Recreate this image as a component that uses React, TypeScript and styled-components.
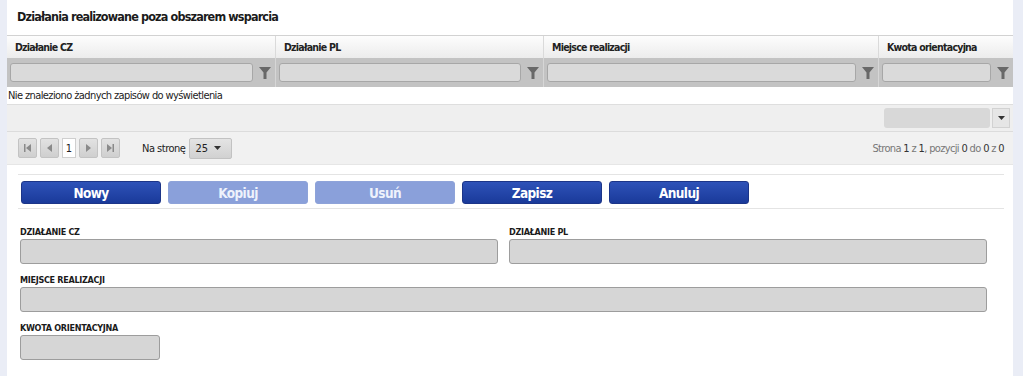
import React from "react";
import styled, { createGlobalStyle } from "styled-components";

const Global = createGlobalStyle`
  html, body { margin: 0; padding: 0; background: #eaedf6; }
  body { font-family: "DejaVu Sans Condensed", "DejaVu Sans", sans-serif; font-stretch: condensed; color: #222; }
`;

const Page = styled.div`
  display: flex;
  width: 1023px;
  height: 376px;
  overflow: hidden;
`;

const Panel = styled.div`
  margin-left: 7px;
  width: 1006px;
  flex-shrink: 0;
  background: #fff;
  display: block;
`;

const Title = styled.div`
  height: 35px;
  box-sizing: border-box;
  padding: 9px 0 0 10px;
  font-size: 12.5px;
  letter-spacing: -0.85px;
  font-weight: bold;
  color: #1b1b1b;
`;

const Cols = "269px 268px 335px 134px";

const HeaderRow = styled.div`
  display: grid;
  grid-template-columns: ${Cols};
  height: 23px;
  border-top: 1px solid #d2d2d2;
  box-sizing: border-box;
  background: linear-gradient(#fdfdfd, #ececec);
`;

const HeaderCell = styled.div`
  font-size: 10.5px;
  letter-spacing: -0.75px;
  font-weight: bold;
  padding: 5px 0 0 8px;
  border-right: 1px solid #dadada;
  &:last-child { border-right: none; }
`;

const FilterRow = styled.div`
  display: grid;
  grid-template-columns: ${Cols};
  height: 29px;
  background: #c3c3c3;
`;

const FilterCell = styled.div`
  display: flex;
  align-items: center;
  padding: 0 4px 0 3px;
  gap: 6px;
  border-right: 1px solid #d6d6d6;
  &:last-child { border-right: none; }
`;

const FilterInput = styled.div`
  flex: 1;
  height: 19px;
  box-sizing: border-box;
  background: #dadada;
  border: 1px solid #a7a7a7;
  border-radius: 3px;
`;

const Funnel = () => (
  <svg width="12" height="14" viewBox="0 0 12 14">
    <path d="M0 1h12L7.5 6.5V13H4.5V6.5Z" fill="#686868" />
  </svg>
);

const EmptyRow = styled.div`
  height: 17px;
  font-size: 11px;
  letter-spacing: -0.6px;
  padding: 2px 0 0 1px;
  box-sizing: border-box;
  color: #222;
`;

const ToolRow = styled.div`
  height: 27px;
  box-sizing: border-box;
  background: #efefef;
  border-top: 1px solid #dedede;
  display: flex;
  justify-content: flex-end;
  align-items: center;
  padding-right: 3px;
  gap: 2px;
`;

const SelBox = styled.div`
  width: 106px;
  height: 20px;
  background: #d8d8d8;
  border-radius: 3px;
`;

const SelBtn = styled.div`
  width: 18px;
  height: 20px;
  background: #e6e6e6;
  border: 1px solid #d2d2d2;
  box-sizing: border-box;
  display: flex;
  align-items: center;
  justify-content: center;
`;

const Caret = ({ c = "#333" }: { c?: string }) => (
  <svg width="7" height="4" viewBox="0 0 7 4"><path d="M0 0h7L3.5 4Z" fill={c} /></svg>
);

const PagerRow = styled.div`
  height: 34px;
  box-sizing: border-box;
  background: #f1f1f1;
  border-top: 1px solid #dcdcdc;
  border-bottom: 1px solid #e6e6e6;
  display: flex;
  align-items: center;
  padding: 0 9px 0 11px;
`;

const PBtn = styled.div`
  width: 19px;
  height: 20px;
  box-sizing: border-box;
  background: linear-gradient(#e2e2e2, #cfcfcf);
  border: 1px solid #c3c3c3;
  border-radius: 2px;
  display: flex;
  align-items: center;
  justify-content: center;
  margin-right: 3px;
`;

const PageNum = styled.div`
  width: 14px;
  height: 20px;
  box-sizing: border-box;
  background: #fff;
  border: 1px solid #cfcfcf;
  font-size: 11px;
  display: flex;
  align-items: center;
  justify-content: center;
  margin-right: 3px;
`;

const NaStrone = styled.span`
  font-size: 11px;
  letter-spacing: -0.5px;
  margin: 0 4px 0 19px;
`;

const PerPage = styled.div`
  width: 43px;
  height: 21px;
  box-sizing: border-box;
  background: linear-gradient(#e4e4e4, #d1d1d1);
  border: 1px solid #c2c2c2;
  border-radius: 2px;
  font-size: 11px;
  display: flex;
  align-items: center;
  justify-content: space-between;
  padding: 0 10px 0 5px;
`;

const PageInfo = styled.div`
  margin-left: auto;
  font-size: 11px;
  letter-spacing: -0.65px;
  color: #777;
  b { color: #333; font-weight: normal; }
`;

const Icon = ({ d }: { d: string }) => (
  <svg width="9" height="8" viewBox="0 0 9 8"><path d={d} fill="#8a8a8a" /></svg>
);

const Body = styled.div`
  padding: 9px 9px 0 11px;
`;

const ButtonBar = styled.div`
  border-top: 1px solid #e4e4e4;
  border-bottom: 1px solid #e4e4e4;
  padding: 6px 0 4px 3px;
  display: flex;
  gap: 7px;
`;

const Btn = styled.div<{ $disabled?: boolean }>`
  width: 140px;
  height: 23px;
  box-sizing: border-box;
  border-radius: 3px;
  border: 1px solid ${(p) => (p.$disabled ? "#8ea3d9" : "#1c3588")};
  background: ${(p) =>
    p.$disabled ? "#8aa0da" : "linear-gradient(#2e52b8, #1a3a9a)"};
  color: ${(p) => (p.$disabled ? "#eef2fc" : "#fff")};
  font-size: 13.5px;
  letter-spacing: -0.6px;
  font-weight: bold;
  display: flex;
  align-items: center;
  justify-content: center;
`;

const Form = styled.div`
  display: grid;
  grid-template-columns: 478px 478px;
  column-gap: 11px;
  padding: 17px 0 0 2px;
`;

const Field = styled.div<{ $span?: boolean }>`
  grid-column: ${(p) => (p.$span ? "1 / span 2" : "auto")};
  display: flex;
  flex-direction: column;
  margin-bottom: 10px;
`;

const Label = styled.div`
  font-size: 9px;
  font-weight: bold;
  letter-spacing: -0.3px;
  color: #1b1b1b;
  height: 13px;
  line-height: 12px;
`;

const Input = styled.div<{ $w?: number }>`
  width: ${(p) => (p.$w ? `${p.$w}px` : "100%")};
  height: 25px;
  box-sizing: border-box;
  background: #d6d6d6;
  border: 1px solid #9d9d9d;
  border-radius: 3px;
`;

export default function App() {
  const cols = ["Działanie CZ", "Działanie PL", "Miejsce realizacji", "Kwota orientacyjna"];
  return (
    <>
      <Global />
      <Page>
        <Panel>
          <Title>Działania realizowane poza obszarem wsparcia</Title>
          <HeaderRow>
            {cols.map((c) => (
              <HeaderCell key={c}>{c}</HeaderCell>
            ))}
          </HeaderRow>
          <FilterRow>
            {cols.map((c) => (
              <FilterCell key={c}>
                <FilterInput />
                <Funnel />
              </FilterCell>
            ))}
          </FilterRow>
          <EmptyRow>Nie znaleziono żadnych zapisów do wyświetlenia</EmptyRow>
          <ToolRow>
            <SelBox />
            <SelBtn><Caret /></SelBtn>
          </ToolRow>
          <PagerRow>
            <PBtn><Icon d="M1 0h1.5v8H1ZM8 0v8L3 4Z" /></PBtn>
            <PBtn><Icon d="M7 0v8L2 4Z" /></PBtn>
            <PageNum>1</PageNum>
            <PBtn><Icon d="M2 0v8l5-4Z" /></PBtn>
            <PBtn><Icon d="M1 0v8l5-4ZM6.5 0H8v8H6.5Z" /></PBtn>
            <NaStrone>Na stronę</NaStrone>
            <PerPage>
              <span>25</span>
              <Caret />
            </PerPage>
            <PageInfo>
              Strona <b>1</b> z <b>1</b>, pozycji <b>0</b> do <b>0</b> z <b>0</b>
            </PageInfo>
          </PagerRow>
          <Body>
            <ButtonBar>
              <Btn>Nowy</Btn>
              <Btn $disabled>Kopiuj</Btn>
              <Btn $disabled>Usuń</Btn>
              <Btn>Zapisz</Btn>
              <Btn>Anuluj</Btn>
            </ButtonBar>
            <Form>
              <Field>
                <Label>DZIAŁANIE CZ</Label>
                <Input />
              </Field>
              <Field>
                <Label>DZIAŁANIE PL</Label>
                <Input />
              </Field>
              <Field $span>
                <Label>MIEJSCE REALIZACJI</Label>
                <Input />
              </Field>
              <Field $span>
                <Label>KWOTA ORIENTACYJNA</Label>
                <Input $w={140} />
              </Field>
            </Form>
          </Body>
        </Panel>
      </Page>
    </>
  );
}
